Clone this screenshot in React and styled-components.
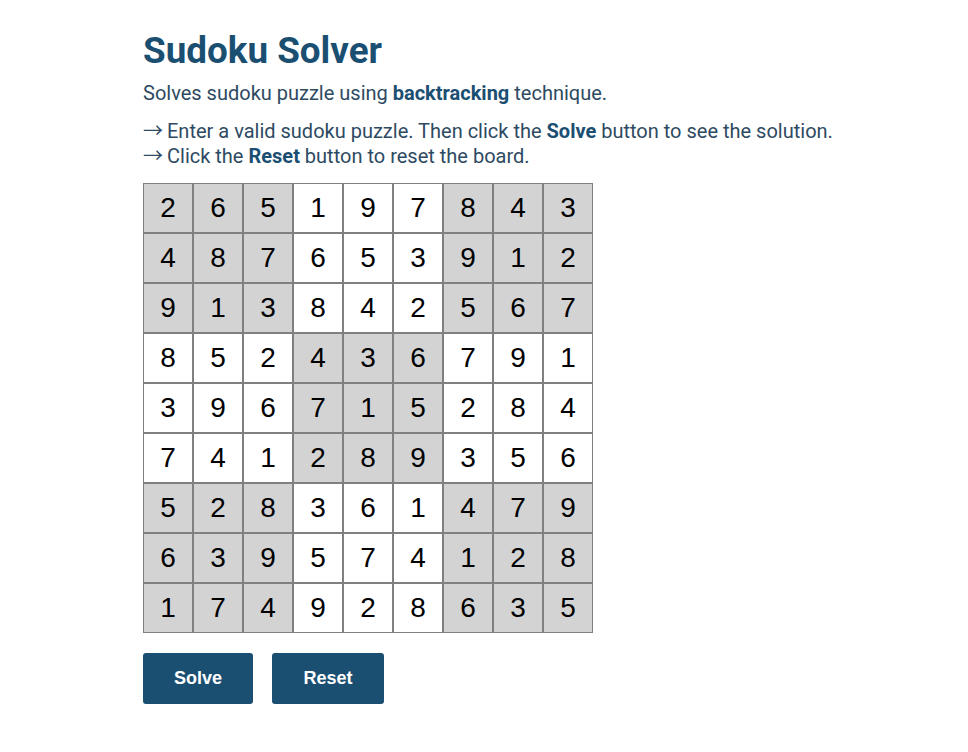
import React, { useState } from "react";
import styled, { createGlobalStyle } from "styled-components";

const GlobalStyle = createGlobalStyle`
  body {
    margin: 0;
    background: #ffffff;
    font-family: Roboto, "Liberation Sans", sans-serif;
  }
`;

const Page = styled.div`
  width: 682px;
  margin: 0 auto;
  padding-top: 29px;
  color: #2e4a62;
`;

const Title = styled.h1`
  margin: 0 0 8px 0;
  font-size: 36.8px;
  line-height: 44px;
  font-weight: 700;
  color: #1b4f72;
`;

const Lead = styled.p`
  margin: 0 0 13px 0;
  font-size: 20px;
  line-height: 25px;
`;

const Steps = styled.div`
  font-size: 20px;
  line-height: 25px;
  margin-bottom: 14px;
  white-space: nowrap;
`;

const Step = styled.div`
  height: 25px;
`;

const Arrow = styled.span`
  font-family: "Noto Sans CJK SC", "DejaVu Sans", sans-serif;
  font-size: 20px;
  line-height: 0;
  margin-right: 4px;
`;

const Strong = styled.b`
  color: #1b4f72;
  font-weight: 700;
`;

const Board = styled.div`
  display: grid;
  grid-template-columns: repeat(9, 50px);
  grid-template-rows: repeat(9, 50px);
  width: 450px;
`;

const Cell = styled.input`
  box-sizing: border-box;
  width: 50px;
  height: 50px;
  margin: 0;
  border: 1px solid #808080;
  background: ${(p) => (p.$shaded ? "#d3d3d3" : "#ffffff")};
  font-family: "Liberation Sans", Arial, sans-serif;
  font-size: 28px;
  color: #000;
  text-align: center;
  padding: 0;
  outline: none;
`;

const Actions = styled.div`
  display: flex;
  gap: 19px;
  margin-top: 20px;
`;

const Button = styled.button`
  width: ${(p) => p.$w}px;
  height: 51px;
  border: none;
  border-radius: 3px;
  background: #1b4f72;
  color: #ffffff;
  font-family: "Liberation Sans", Arial, sans-serif;
  font-size: 18px;
  font-weight: 700;
  cursor: pointer;
`;

const solved = [
  "265197843",
  "487653912",
  "913842567",
  "852436791",
  "396715284",
  "741289356",
  "528361479",
  "639574128",
  "174928635",
];

const isShaded = (r, c) => {
  const br = Math.floor(r / 3);
  const bc = Math.floor(c / 3);
  return (br + bc) % 2 === 0;
};

export default function App() {
  const [board, setBoard] = useState(solved.map((row) => row.split("")));

  const update = (r, c, v) => {
    const next = board.map((row) => row.slice());
    next[r][c] = v.slice(-1);
    setBoard(next);
  };

  return (
    <>
      <GlobalStyle />
      <Page>
        <Title>Sudoku Solver</Title>
        <Lead>
          Solves sudoku puzzle using <Strong>backtracking</Strong> technique.
        </Lead>
        <Steps>
          <Step>
            <Arrow>→</Arrow>Enter a valid sudoku puzzle. Then click the <Strong>Solve</Strong> button to see the solution.
          </Step>
          <Step>
            <Arrow>→</Arrow>Click the <Strong>Reset</Strong> button to reset the board.
          </Step>
        </Steps>
        <Board>
          {board.map((row, r) =>
            row.map((v, c) => (
              <Cell
                key={r + "-" + c}
                $shaded={isShaded(r, c)}
                value={v}
                onChange={(e) => update(r, c, e.target.value)}
              />
            ))
          )}
        </Board>
        <Actions>
          <Button $w={110}>Solve</Button>
          <Button $w={112} onClick={() => setBoard(Array.from({ length: 9 }, () => Array(9).fill("")))}>
            Reset
          </Button>
        </Actions>
      </Page>
    </>
  );
}
